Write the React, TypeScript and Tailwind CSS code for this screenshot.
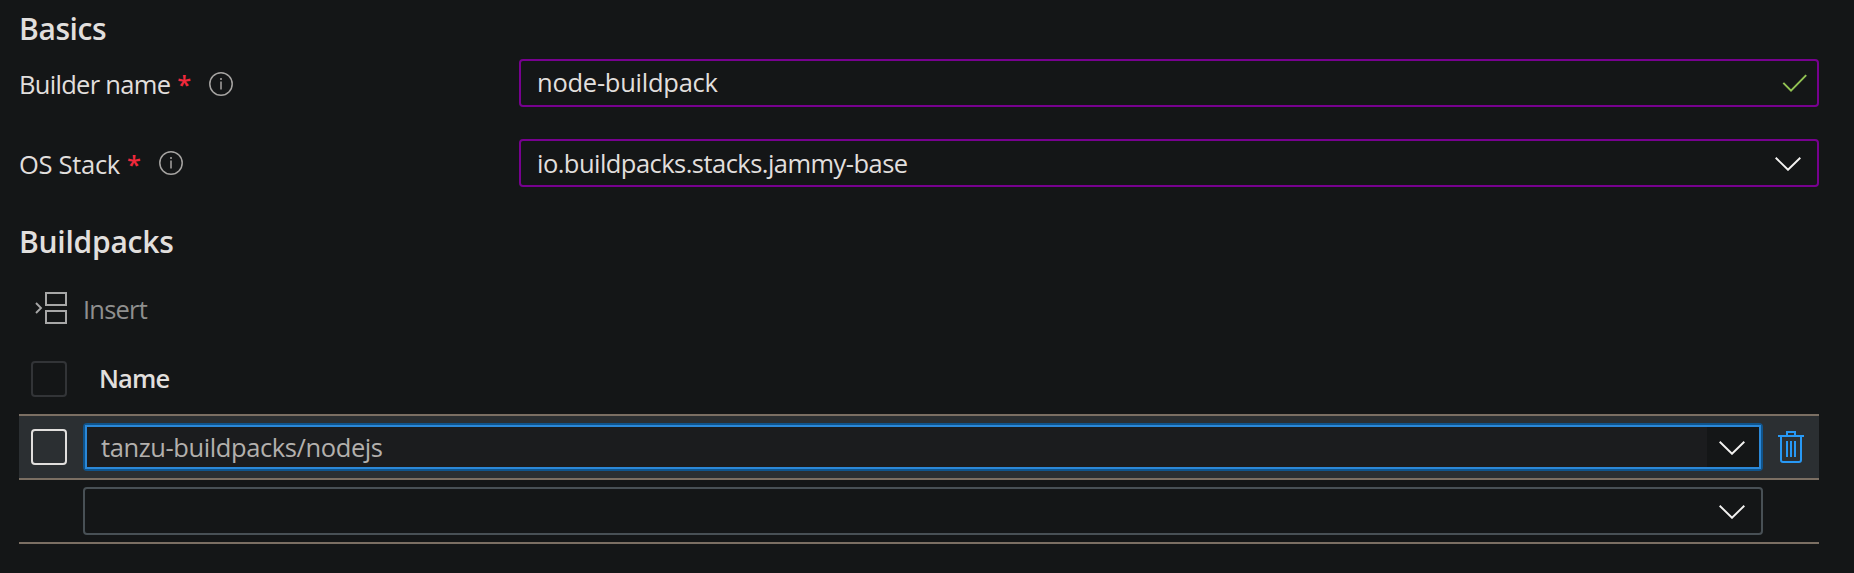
import type { ReactNode } from "react";

function Info({ className }: { className: string }) {
  return (
    <svg width="24" height="24" viewBox="0 0 24 24" fill="none" className={className}>
      <circle cx="12" cy="12" r="11.2" stroke="#a6a4a2" strokeWidth="1.5" />
      <path d="M12 9.5v8M12 6v2" stroke="#a6a4a2" strokeWidth="1.5" />
    </svg>
  );
}

function Chevron() {
  return (
    <svg width="26" height="14" viewBox="0 0 26 14" fill="none" className="mt-[2px] shrink-0">
      <path d="M.7.7 13 12.8 25.3.7" stroke="#f3f2f1" strokeWidth="1.9" />
    </svg>
  );
}

function Label({ children, className, iconClassName }: { children: ReactNode; className: string; iconClassName: string }) {
  return (
    <div className="flex w-[500px] shrink-0 items-start pt-[7px] leading-[36px]">
      <span className={className}>{children}</span>
      <span className="ml-[7px] w-[12px] font-semibold text-[#f1293c]">*</span>
      <Info className={iconClassName} />
    </div>
  );
}

export default function App() {
  return (
    <main className="h-[573px] w-[1854px] overflow-hidden bg-[#141617] pl-[19px] pr-[35px] font-['Open_Sans',sans-serif] text-[25.5px] text-[#e1dfdd]">
      <h2 className="h-[59px] pt-[8px] text-[30px] font-semibold leading-[41px] tracking-[-0.4px]">Basics</h2>
      <div className="flex h-[80px]">
        <Label className="tracking-[-0.7px]" iconClassName="ml-[20px] mt-[6px] shrink-0">Builder name</Label>
        <div className="flex h-[48px] flex-1 items-center justify-between rounded-[4px] border-2 border-[#77018f] pl-[16px] pr-[9px] leading-[36px]">
          <span className="pb-[2px] tracking-[-0.25px]">node-buildpack</span>
          <svg width="26" height="20" viewBox="0 0 26 20" fill="none">
            <path d="M1.3 9.9 9 17.6 24.2 2.1" stroke="#92c353" strokeWidth="2" />
          </svg>
        </div>
      </div>
      <div className="flex h-[80px]">
        <Label className="tracking-[-0.3px]" iconClassName="ml-[20px] mt-[5px] shrink-0">OS Stack</Label>
        <div className="flex h-[48px] flex-1 items-center justify-between rounded-[4px] border-2 border-[#77018f] pl-[16px] pr-[16px] leading-[36px]">
          <span className="tracking-[-0.54px]">io.buildpacks.stacks.jammy-base</span>
          <Chevron />
        </div>
      </div>
      <h2 className="h-[73px] pt-[2px] text-[30px] font-semibold leading-[41px] tracking-[-0.25px]">Buildpacks</h2>
      <div className="flex h-[69px] items-start pl-[16px] text-[#8f8f8e]">
        <svg width="32" height="32" viewBox="0 0 32 32" fill="none" className="shrink-0">
          <path d="M1 11l5 5-5 5" stroke="#a7a7a7" strokeWidth="1.9" />
          <path d="M11 1h20v12H11zM11 19h20v12H11z" stroke="#a7a7a7" strokeWidth="2" />
        </svg>
        <span className="ml-[16px] leading-[34px] tracking-[-0.8px]">Insert</span>
      </div>
      <div className="flex h-[53px] items-start pl-[12px]">
        <div className="h-[36px] w-[36px] rounded-[4px] border-2 border-[#323437]" />
        <span className="ml-[32px] font-semibold leading-[34px] tracking-[-0.85px]">Name</span>
      </div>
      <div className="flex h-[66px] items-center border-y-2 border-[#7b6f63] bg-[#2b2f32] pl-[12px]">
        <div className="h-[36px] w-[36px] rounded-[4px] border-2 border-[#e1dfdd]" />
        <div className="ml-[16px] h-[48px] w-[1680px] rounded-[4px] border-2 border-[#0f548c]">
          <div className="flex h-full items-center border-2 border-[#2b88d8] bg-[#1b1c1e] pl-[14px] text-[#b3b0ad]">
            <span className="flex-1 leading-[36px] tracking-[-0.4px]">tanzu-buildpacks/nodejs</span>
            <div className="flex h-full w-[52px] items-center bg-[#141617] pl-[12px]">
              <Chevron />
            </div>
          </div>
        </div>
        <svg width="26" height="32" viewBox="0 0 26 32" fill="none" className="ml-[15px]">
          <path d="M0 5h26M9 5V1h8v4M3 5v24q0 2 2 2h16q2 0 2-2V5M9 10v16M13 10v16M17 10v16" stroke="#2899f5" strokeWidth="2" />
        </svg>
      </div>
      <div className="flex h-[64px] items-center border-b-2 border-[#7b6f63] pl-[64px]">
        <div className="flex h-[48px] w-[1680px] items-center justify-end rounded-[4px] border-2 border-[#485055] pr-[16px]">
          <Chevron />
        </div>
      </div>
    </main>
  );
}
